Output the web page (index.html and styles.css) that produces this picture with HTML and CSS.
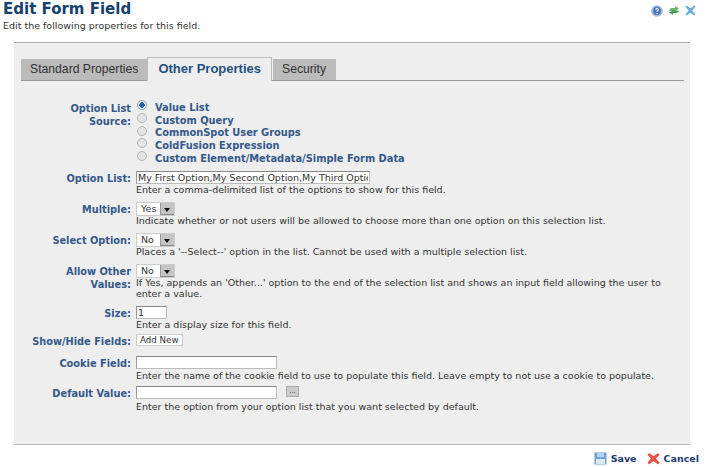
FILE: index.html
```html
<!DOCTYPE html>
<html lang="en">
<head>
<meta charset="utf-8">
<title>Edit Form Field</title>
<link rel="stylesheet" href="styles.css">
</head>
<body>
<header class="head">
  <div>
    <h1 class="title">Edit Form Field</h1>
    <p class="subtitle">Edit the following properties for this field.</p>
  </div>
  <div class="head-icons">
    <svg width="12" height="12" viewBox="0 0 13 13"><circle cx="6.500" cy="6.500" r="6.300" fill="#9db7dc"/><circle cx="6.500" cy="6.500" r="4.200" fill="#4d76b5"/><path d="M5 5.200c.2-1.600 3-1.600 3 0 0 1-1.400 1-1.400 2.200" stroke="#e6eef8" stroke-width="1.300" fill="none"/><rect x="5.900" y="8.600" width="1.400" height="1.400" fill="#e6eef8"/></svg>
    <svg width="10" height="11" viewBox="0 0 10 11"><path d="M0 5l2-2h4V1l4 2.500L6 6H1z" fill="#6db36a"/><path d="M10 6L8 8H4v2L0 7.500 4 5.500h5z" fill="#3f9a52"/></svg>
    <svg width="11" height="11" viewBox="0 0 12 12"><path d="M2 .5l4 3 4-3 1.500 1.500L8 6l3.500 4L10 11.500l-4-3-4 3L.5 10 4 6 .5 2z" fill="#6bb0d8"/></svg>
  </div>
</header>

<main class="panel">
  <nav class="tabs">
    <span class="tab">Standard Properties</span>
    <span class="tab tab-active">Other Properties</span>
    <span class="tab tab-last">Security</span>
  </nav>

  <form class="form">
    <div class="row row-source">
      <label class="label">Option List Source:</label>
      <div class="field radios">
        <label class="radio"><input type="radio" name="src" checked><span>Value List</span></label>
        <label class="radio"><input type="radio" name="src"><span>Custom Query</span></label>
        <label class="radio"><input type="radio" name="src"><span>CommonSpot User Groups</span></label>
        <label class="radio"><input type="radio" name="src"><span>ColdFusion Expression</span></label>
        <label class="radio"><input type="radio" name="src"><span>Custom Element/Metadata/Simple Form Data</span></label>
      </div>
    </div>
    <div class="row row-option">
      <label class="label">Option List:</label>
      <div class="field">
        <input class="text text-list" type="text" value="My First Option,My Second Option,My Third Option">
        <p class="hint">Enter a comma-delimited list of the options to show for this field.</p>
      </div>
    </div>
    <div class="row">
      <label class="label">Multiple:</label>
      <div class="field">
        <div class="select"><span>Yes</span><i class="arrow"></i></div>
        <p class="hint">Indicate whether or not users will be allowed to choose more than one option on this selection list.</p>
      </div>
    </div>
    <div class="row">
      <label class="label">Select Option:</label>
      <div class="field">
        <div class="select"><span>No</span><i class="arrow"></i></div>
        <p class="hint">Places a '--Select--' option in the list. Cannot be used with a multiple selection list.</p>
      </div>
    </div>
    <div class="row">
      <label class="label">Allow Other Values:</label>
      <div class="field">
        <div class="select"><span>No</span><i class="arrow"></i></div>
        <p class="hint">If Yes, appends an 'Other...' option to the end of the selection list and shows an input field allowing the user to enter a value.</p>
      </div>
    </div>
    <div class="row row-size">
      <label class="label">Size:</label>
      <div class="field">
        <input class="text text-size" type="text" value="1">
        <p class="hint">Enter a display size for this field.</p>
      </div>
    </div>
    <div class="row row-show">
      <label class="label">Show/Hide Fields:</label>
      <div class="field"><button class="btn" type="button">Add New</button></div>
    </div>
    <div class="row row-cookie">
      <label class="label">Cookie Field:</label>
      <div class="field">
        <input class="text text-wide" type="text">
        <p class="hint">Enter the name of the cookie field to use to populate this field. Leave empty to not use a cookie to populate.</p>
      </div>
    </div>
    <div class="row row-default">
      <label class="label">Default Value:</label>
      <div class="field">
        <div class="inline"><input class="text text-wide" type="text"><button class="dots" type="button">...</button></div>
        <p class="hint">Enter the option from your option list that you want selected by default.</p>
      </div>
    </div>
  </form>
</main>

<footer class="foot">
  <a class="action">
    <svg width="13" height="13" viewBox="0 0 13 13"><rect x=".5" y=".5" width="12" height="12" fill="#6f9fd4"/><rect x="3" y="1" width="7" height="4" fill="#b9d2ec"/><rect x="2" y="7" width="9" height="5" fill="#dbe8f5"/></svg>
    Save</a>
  <a class="action">
    <svg width="13" height="13" viewBox="0 0 13 13"><path d="M2 1l4.500 3L11 1l1.500 2L9 6.500l3.500 4L11 12.500l-4.500-3.500L2 12.500.5 10.500 4 6.500.5 3z" fill="#e8534a"/></svg>
    Cancel</a>
</footer>
</body>
</html>
```
FILE: styles.css
```css
* { box-sizing: border-box; }
html, body { margin: 0; padding: 0; background: #fff; }
body { width: 709px; height: 467px; overflow: hidden; font-family: "DejaVu Sans", Verdana, sans-serif; font-size: 9.500px; color: #333; }

.head { display: flex; justify-content: space-between; height: 42px; padding-left: 3px; padding-right: 13px; }
.title { margin: 0; padding-top: 1px; font-size: 15px; line-height: 17px; font-weight: bold; color: #17406e; }
.subtitle { margin: 0; font-size: 9.500px; line-height: 11px; padding-top: 2px; color: #333; }
.head-icons { display: flex; gap: 6px; padding-top: 5px; align-items: flex-start; }

.panel { width: 676px; height: 403px; margin-left: 14px; background: #eee; border-top: 1px solid #aaa; border-bottom: 1px solid #bbb; padding: 14px 6px 0 7px; }

.tabs { display: flex; align-items: flex-end; height: 24px; border-bottom: 1px solid #999; }
.tab { display: block; height: 21px; padding: 0 9px; background: #bbb; color: #333; font-family: "Liberation Sans", Arial, sans-serif; font-size: 12.200px; line-height: 21px; }
.tab-active { height: 24px; margin-bottom: -1px; margin-right: 1px; padding: 0 10px; background: #eee; border: 1px solid #bbb; border-bottom: 0; color: #24507f; font-weight: bold; font-size: 13px; line-height: 22px; }
.tab-last { padding-right: 10px; }

.form { padding-top: 19px; }
.row { display: flex; gap: 5px; padding-top: 1.500px; margin-bottom: 5px; }
.label { width: 110px; flex: none; padding-left: 6px; padding-top: 1px; text-align: right; font-weight: bold; font-size: 9.800px; line-height: 13px; color: #34598a; }
.field { flex: 1; min-width: 0; }
.hint { margin: -.5px 0 0; font-size: 9.500px; line-height: 11px; color: #333; }

.radios { display: flex; flex-direction: column; }
.radio { display: flex; align-items: center; height: 12.700px; font-weight: bold; font-size: 9.850px; color: #34598a; }
.radio input { appearance: none; width: 10px; height: 10px; margin: 0 8px 4px 1px; border-radius: 50%; border: 1px solid #b5b5b5; background: #e4e4e4; }
.radio input:checked { background: radial-gradient(circle, #2c5f9e 0 2.500px, #e8eef5 3px); border-color: #8aa0bc; }
.row-source { padding-top: 1px; margin-bottom: 5px; }

.text { display: block; height: 13px; margin-bottom: 1px; padding: 0 1px; border: 1px solid #bbb; border-top-color: #888; border-left-color: #999; background: #fff; font-family: "DejaVu Sans", Verdana, sans-serif; font-size: 9.500px; color: #333; }
.text-list { width: 234px; }
.text-size { width: 31px; }
.text-wide { width: 141px; }

.select { display: flex; justify-content: space-between; width: 39px; height: 14px; background: #fff; border: 1px solid #ccc; font-size: 9.500px; line-height: 12px; padding-left: 4px; }
.arrow { position: relative; display: block; width: 14px; height: 12px; background: #c4c4c4; border-left: 1px solid #999; border-bottom: 1px solid #888; }
.arrow::after { content: ""; position: absolute; left: 3px; top: 5px; border: 3px solid transparent; border-top: 4px solid #111; border-bottom: 0; }

.btn { display: block; height: 12px; padding: 0 3px; background: #fff; border: 1px solid #ccc; font-family: "DejaVu Sans", Verdana, sans-serif; font-size: 8.700px; line-height: 10px; color: #333; }
.inline { display: flex; align-items: flex-start; gap: 9px; }
.dots { width: 13px; height: 11px; padding: 0; background: #ccc; border: 1px solid #aaa; font-size: 8px; line-height: 6px; color: #444; }
.row-size { margin-bottom: 2.500px; }
.row-show { margin-bottom: 6.500px; }
.row-cookie { margin-bottom: 3.500px; }
.row-default .hint { margin-top: 1.500px; }

.foot { display: flex; justify-content: flex-end; gap: 10px; padding: 7px 10px 0 0; }
.action { display: flex; align-items: center; gap: 4px; font-weight: bold; font-size: 9.500px; color: #233a70; }
```
